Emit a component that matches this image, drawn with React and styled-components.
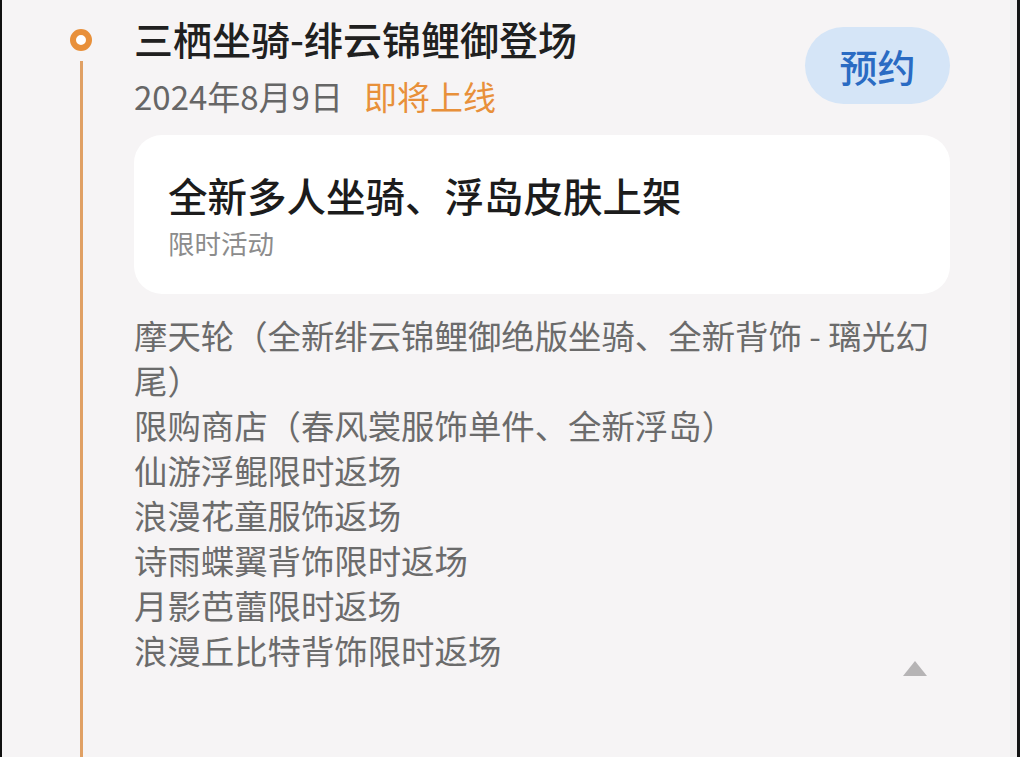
import styled, { createGlobalStyle } from "styled-components";

const GlobalStyle = createGlobalStyle`
  html, body {
    margin: 0;
    padding: 0;
    background: #000;
  }
  body {
    font-family: "Noto Sans CJK SC", "Noto Sans", sans-serif;
  }
`;

const Frame = styled.div`
  height: 757px;
  box-sizing: border-box;
  border-left: 2px solid #111;
  border-right: 3px solid #111;
  background: #f6f4f5;
  box-shadow: inset -7px 0 0 #efeded;
  display: flex;
  overflow: hidden;
`;

const Timeline = styled.div`
  width: 132px;
  flex-shrink: 0;
  display: flex;
  flex-direction: column;
  align-items: flex-start;
  padding: 29px 0 0 68px;
  box-sizing: border-box;
`;

const Dot = styled.div`
  width: 22px;
  height: 22px;
  box-sizing: border-box;
  border-radius: 50%;
  border: 6px solid #e8903a;
  background: #fff;
`;

const Line = styled.div`
  width: 3px;
  flex: 1;
  margin: 10px 0 0 10px;
  background: #e0a064;
`;

const Content = styled.div`
  width: 816px;
  padding-top: 14px;
  display: flex;
  flex-direction: column;
`;

const Header = styled.div`
  display: flex;
  align-items: center;
  justify-content: space-between;
`;

const HeadText = styled.div`
  display: flex;
  flex-direction: column;
`;

const Title = styled.div`
  font-size: 39px;
  line-height: 48px;
  font-weight: 500;
  color: #202020;
`;

const Meta = styled.div`
  margin-top: 14px;
  font-size: 33px;
  line-height: 40px;
  color: #666;
  display: flex;
  gap: 21px;
`;

const Status = styled.span`
  color: ${(p) => p.color};
`;

const Reserve = styled.button`
  width: 145px;
  height: 77px;
  border: none;
  border-radius: 39px;
  background: #d5e5f7;
  color: #2a6bc3;
  font-family: inherit;
  font-size: 38px;
  font-weight: 500;
  padding: 0;
`;

const Card = styled.div`
  margin-top: 19px;
  background: #fff;
  border-radius: 28px;
  padding: 36px 34px 34px;
`;

const CardTitle = styled.div`
  font-size: 39.5px;
  line-height: 48px;
  font-weight: 500;
  color: #1c1c1c;
`;

const CardSub = styled.div`
  margin-top: 7px;
  font-size: 26.5px;
  line-height: 34px;
  color: #8c8c8c;
`;

const Details = styled.div`
  margin-top: 18px;
  display: grid;
`;

const List = styled.div`
  grid-area: 1 / 1;
  font-size: 33.4px;
  line-height: 45px;
  color: #6b6b6b;
`;

const Collapse = styled.div`
  grid-area: 1 / 1;
  align-self: end;
  justify-self: end;
  margin: 0 23px -4px 0;
  width: 0;
  height: 0;
  border-left: 12px solid transparent;
  border-right: 12px solid transparent;
  border-bottom: 15px solid #b6b4b5;
`;

const items = [
  "摩天轮（全新绯云锦鲤御绝版坐骑、全新背饰 - 璃光幻尾）",
  "限购商店（春风裳服饰单件、全新浮岛）",
  "仙游浮鲲限时返场",
  "浪漫花童服饰返场",
  "诗雨蝶翼背饰限时返场",
  "月影芭蕾限时返场",
  "浪漫丘比特背饰限时返场",
];

export default function App() {
  return (
    <>
      <GlobalStyle />
      <Frame>
        <Timeline>
          <Dot />
          <Line />
        </Timeline>
        <Content>
          <Header>
            <HeadText>
              <Title>三栖坐骑-绯云锦鲤御登场</Title>
              <Meta>
                <span>2024年8月9日</span>
                <Status color="#e8903a">即将上线</Status>
              </Meta>
            </HeadText>
            <Reserve>预约</Reserve>
          </Header>
          <Card>
            <CardTitle>全新多人坐骑、浮岛皮肤上架</CardTitle>
            <CardSub>限时活动</CardSub>
          </Card>
          <Details>
            <List>
              {items.map((t) => (
                <div key={t}>{t}</div>
              ))}
            </List>
            <Collapse />
          </Details>
        </Content>
      </Frame>
    </>
  );
}
